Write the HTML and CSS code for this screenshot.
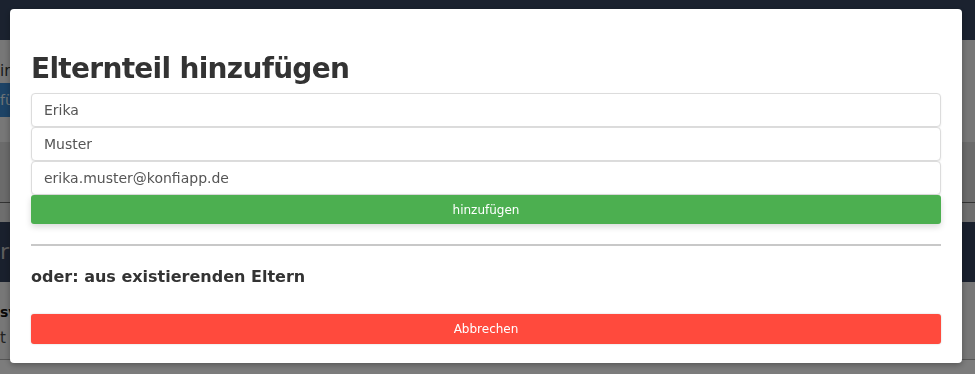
FILE: index.html
```html
<!DOCTYPE html>
<html lang="de">
<head>
<meta charset="UTF-8">
<meta name="viewport" content="width=device-width, initial-scale=1.0">
<title>Elternteil hinzufügen</title>
<link rel="stylesheet" href="styles.css">
</head>
<body>
<!-- page behind the dialog -->
<div class="page">
  <nav class="topbar"></nav>
  <section class="panel">
    <div class="panel-text">ir</div>
    <div class="panel-btn">fü</div>
  </section>
  <section class="list">
    <div class="list-row"></div>
    <div class="list-row dark"></div>
    <div class="list-row tail"></div>
  </section>
  <section class="band">r</section>
  <section class="lower">
    <div class="lower-title">sv</div>
    <div class="lower-text">t</div>
  </section>
</div>

<div class="overlay"></div>

<div class="modal">
  <h2 class="modal-title">Elternteil hinzufügen</h2>
  <form class="parent-form" onsubmit="return false">
    <input class="field" type="text" value="Erika">
    <input class="field" type="text" value="Muster">
    <input class="field" type="email" value="erika.muster@konfiapp.de">
    <button class="btn btn-add" type="submit">hinzufügen</button>
  </form>
  <hr class="divider">
  <h3 class="modal-sub">oder: aus existierenden Eltern</h3>
  <button class="btn btn-cancel" type="button">Abbrechen</button>
</div>
</body>
</html>
```

FILE: styles.css
```css
body {
  font-family: "DejaVu Sans", "Open Sans", sans-serif;
  margin: 0;
  padding: 0;
  background-color: #f8f8f8;
  overflow: hidden;
}
.page {
  height: 374px;
}
.topbar {
  height: 40px;
  background-color: #36455f;
}
.panel {
  height: 77px;
  background-color: #eeeeee;
}
.panel-text {
  height: 43px;
  line-height: 62px;
  font-size: 15px;
  color: #333;
}
.panel-btn {
  width: 14px;
  height: 34px;
  line-height: 34px;
  background-color: #3a86cc;
  color: #dde6ef;
  font-size: 14px;
}
.list {
  background-color: #eeeeee;
}
.list-row {
  height: 25px;
}
.list-row.dark {
  height: 60px;
  background-color: #d6d6d6;
  border-bottom: 1px solid #666;
}
.list-row.tail {
  height: 19px;
  background-color: #dcdcdc;
}
.band {
  height: 60px;
  background-color: #33405b;
  color: #bbb;
  font-size: 22px;
  line-height: 60px;
}
.lower {
  height: 77px;
  background-color: #eeeeee;
  border-bottom: 1px solid #aaa;
}
.lower-title {
  padding-top: 22px;
  font-weight: bold;
  font-size: 14px;
  color: #111;
}
.lower-text {
  padding-top: 9px;
  font-size: 15px;
  color: #444;
}
.overlay {
  position: fixed;
  top: 0;
  left: 0;
  right: 0;
  bottom: 0;
  background-color: rgba(0, 0, 0, 0.5);
}
.modal {
  position: fixed;
  top: 9px;
  left: 10px;
  width: 952px;
  box-sizing: border-box;
  padding: 20px 21px 19px;
  background-color: #fff;
  border-radius: 4px;
  box-shadow: 0 2px 6px rgba(0, 0, 0, 0.3);
}
.modal-title {
  margin: 16px 0 0;
  font-size: 28px;
  line-height: 48px;
  font-weight: bold;
  letter-spacing: -0.7px;
  color: #333;
}
.parent-form {
  margin: 0;
}
.field {
  display: block;
  width: 100%;
  height: 34px;
  box-sizing: border-box;
  margin: 0;
  padding: 0 12px;
  border: 1px solid #dcdcdc;
  border-radius: 4px;
  font-family: inherit;
  font-size: 14px;
  color: #555;
  box-shadow: 0 1px 2px rgba(0, 0, 0, 0.08);
}
.btn {
  display: block;
  width: 100%;
  border: none;
  border-radius: 3px;
  color: #fff;
  font-family: inherit;
  font-size: 12px;
  cursor: pointer;
}
.btn-add {
  height: 29px;
  background-color: #4caf50;
  box-shadow: 0 3px 6px rgba(0, 0, 0, 0.15);
}
.divider {
  margin: 20px 0 0;
  border: none;
  border-top: 2px solid #c8c8c8;
}
.modal-sub {
  margin: 0;
  padding: 18px 0 0;
  font-size: 16px;
  line-height: 25px;
  font-weight: bold;
  color: #333;
}
.btn-cancel {
  margin-top: 25px;
  height: 30px;
  background-color: #ff4a3d;
  box-shadow: 0 0 2px rgba(0, 0, 0, 0.2);
}
```
